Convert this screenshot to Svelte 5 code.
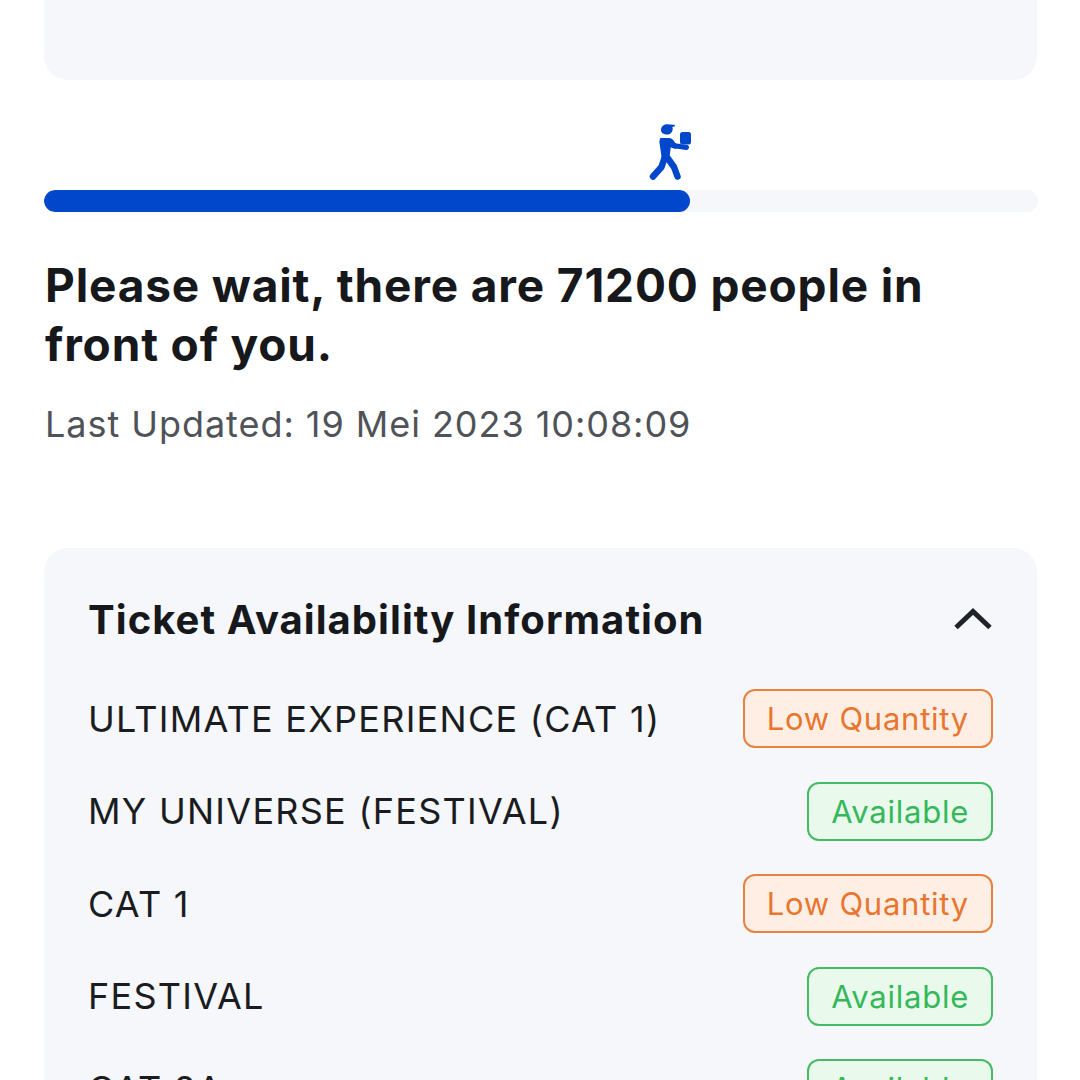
<script>
  const rows = [
    { name: 'ULTIMATE EXPERIENCE (CAT 1)', status: 'Low Quantity', kind: 'low' },
    { name: 'MY UNIVERSE (FESTIVAL)', status: 'Available', kind: 'ok' },
    { name: 'CAT 1', status: 'Low Quantity', kind: 'low' },
    { name: 'FESTIVAL', status: 'Available', kind: 'ok' },
    { name: 'CAT 2A', status: 'Available', kind: 'ok' }
  ];
</script>

<div class="page">
  <div class="top-card"></div>

  <div class="progress">
    <div class="runner-track">
      <svg class="runner" viewBox="0 0 44 60" width="44" height="60" aria-hidden="true">
        <g fill="#0047cc">
          <path d="M13 8c0-3.200 2.600-5.800 6-5.800 2.200 0 4.500.6 7 .5 1.200 0 1.300 1.500.2 1.800l-1.900.5c.4.900.5 1.700.4 2.500-.3 2.900-2.600 5-5.500 5-3.400 0-6.200-1.500-6.200-4.500z"/>
          <rect x="32" y="10" width="11" height="12.500" rx="2.500"/>
          <path d="M12 16h9c2 0 3.500 1 4.500 2.500l3 4v4.500c-2 0-3.500-1-4.500-2l-1-1-1 7-1 8h-7l-1-8-1.500-10c-.3-3 .5-5.500 2-5.500z"/>
        </g>
        <g fill="none" stroke="#0047cc" stroke-linecap="round" stroke-linejoin="round">
          <path d="M25 23.500 38.500 25.500" stroke-width="5"/>
          <path d="M16.500 36 13.500 45 5 54.500" stroke-width="6.500"/>
          <path d="M19.500 36 26 45 29.500 54.500" stroke-width="6.500"/>
        </g>
      </svg>
    </div>
    <div class="bar"><div class="fill"></div></div>
  </div>

  <h1>Please wait, there are 71200 people in front of you.</h1>
  <p class="updated">Last Updated: 19 Mei 2023 10:08:09</p>

  <section class="info">
    <header>
      <h2>Ticket Availability Information</h2>
      <svg class="chevron" viewBox="0 0 40 24" width="40" height="24" aria-hidden="true">
        <path d="M3 19.500 20 3.500l17 16" fill="none" stroke="#1f2329" stroke-width="5"/>
      </svg>
    </header>
    <ul>
      {#each rows as row}
        <li>
          <span class="name">{row.name}</span>
          <span class="badge {row.kind}">{row.status}</span>
        </li>
      {/each}
    </ul>
  </section>
</div>

<style>
  :global(body) {
    margin: 0;
    background: #fff;
  }
  .page {
    height: 1080px;
    overflow: hidden;
    box-sizing: border-box;
    padding: 0 43px 0 44px;
    font-family: Inter, "Noto Sans", sans-serif;
    color: #16181c;
  }
  .top-card {
    height: 80px;
    background: #f5f7fb;
    border-radius: 0 0 24px 24px;
  }
  .progress {
    margin-top: 44px;
  }
  .runner-track {
    height: 66px;
    position: relative;
  }
  .runner {
    position: absolute;
    left: 604px;
    top: -2px;
  }
  .bar {
    height: 22px;
    margin-right: -1px;
    background: #f5f7fb;
    border-radius: 11px;
    overflow: hidden;
  }
  .fill {
    width: 646px;
    height: 100%;
    background: #0047cc;
    border-radius: 11px;
  }
  h1 {
    margin: 44px 0 0 1px;
    font-size: 46px;
    line-height: 59px;
    font-weight: 700;
    letter-spacing: 0.85px;
    max-width: 940px;
  }
  .updated {
    margin: 28px 0 0 1px;
    font-size: 36px;
    line-height: 44px;
    letter-spacing: 0.95px;
    color: #4f5358;
  }
  .info {
    margin-top: 102px;
    background: #f5f7fb;
    border-radius: 24px;
    padding: 44px 44px 0;
  }
  header {
    display: flex;
    justify-content: space-between;
    align-items: center;
    height: 56px;
  }
  h2 {
    margin: 0;
    font-size: 40px;
    font-weight: 700;
    line-height: 56px;
    letter-spacing: 1.05px;
  }
  ul {
    list-style: none;
    margin: 41px 0 0;
    padding: 0;
    display: flex;
    flex-direction: column;
    gap: 33.5px;
  }
  li {
    display: flex;
    justify-content: space-between;
    align-items: center;
  }
  .name {
    font-size: 36px;
    letter-spacing: 1.27px;
    color: #1a1c20;
  }
  .badge {
    box-sizing: border-box;
    height: 59px;
    display: flex;
    align-items: center;
    padding: 0 22px;
    border-radius: 12px;
    font-size: 31px;
    letter-spacing: 0.75px;
    border: 2px solid;
  }
  .low {
    color: #e8762f;
    border-color: #e8823f;
    background: #ffeee4;
  }
  .ok {
    color: #35b85a;
    border-color: #45bb66;
    background: #e9f9ec;
  }
</style>
